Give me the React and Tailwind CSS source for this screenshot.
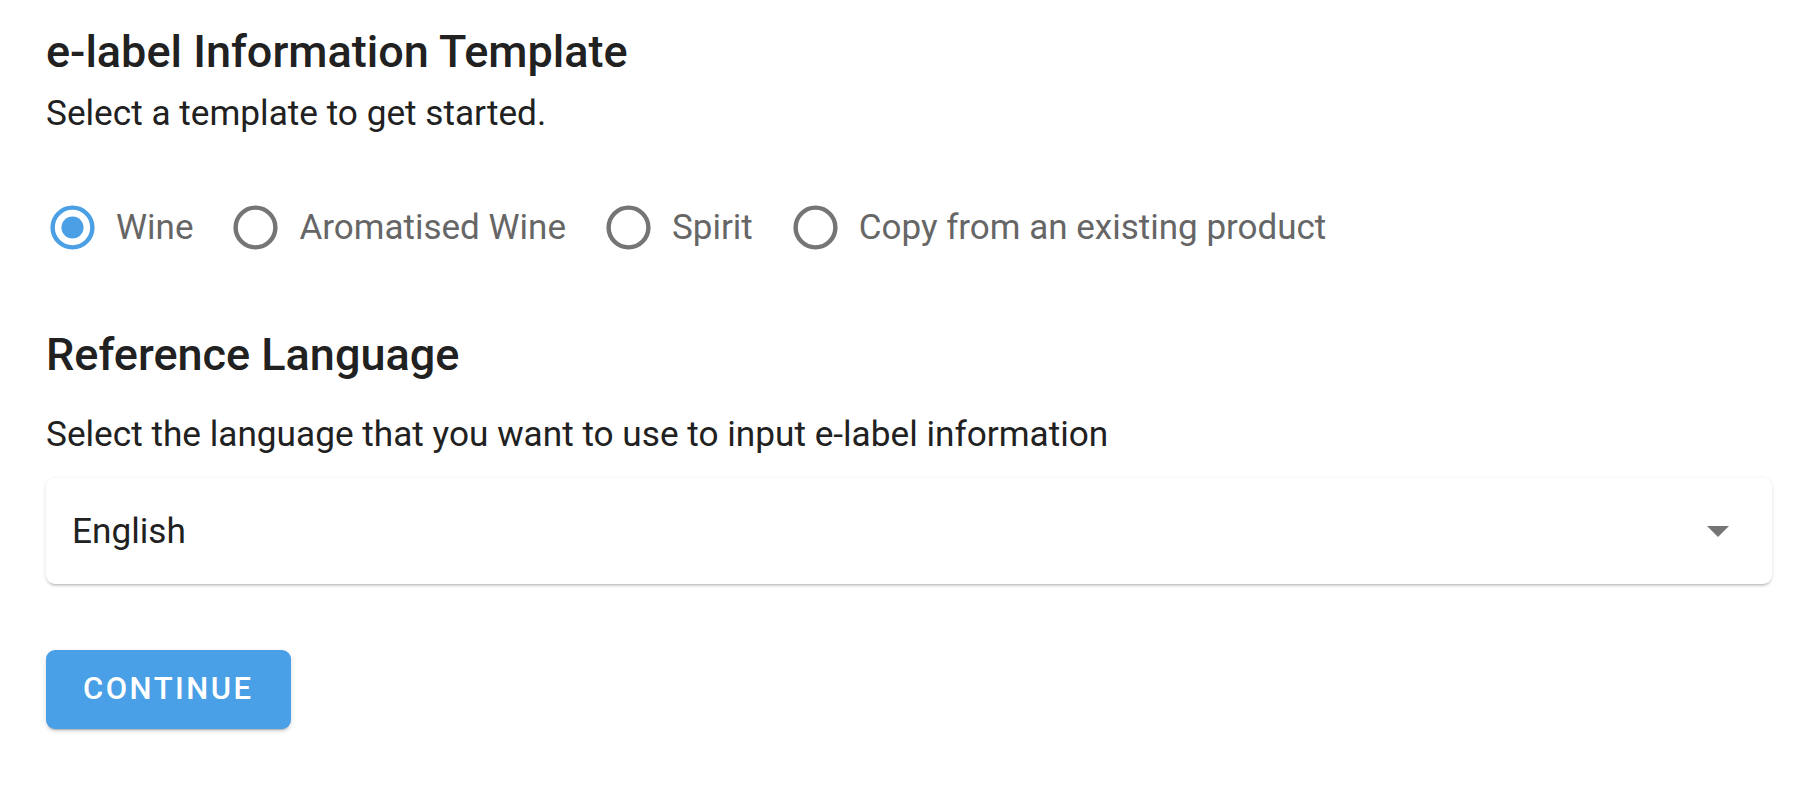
import { useState } from 'react';

const options = ['Wine', 'Aromatised Wine', 'Spirit', 'Copy from an existing product'];

function RadioIcon({ checked }) {
    return (
        <svg viewBox="0 0 24 24" className="w-[53px] h-[53px] shrink-0">
            <circle cx="12" cy="12" r="9" fill="none" strokeWidth="2" stroke={checked ? '#4a9fe5' : '#757575'} />
            {checked && <circle cx="12" cy="12" r="5" fill="#4a9fe5" />}
        </svg>
    );
}

export default function App() {
    const [template, setTemplate] = useState('Wine');

    return (
        <div className="min-h-screen bg-white pl-[46px] pt-[26px] text-[#212121]" style={{ fontFamily: 'Roboto, "Noto Sans", sans-serif' }}>
            {/* Template */}
            <h2 className="text-[45px] leading-[52px] font-medium">e-label Information Template</h2>
            <p className="mt-[14px] text-[35.2px] leading-[42px]">Select a template to get started.</p>

            <div className="mt-[67px] flex items-center gap-[36px]">
                {options.map((opt) => (
                    <label key={opt} className="flex items-center gap-[17px] cursor-pointer" onClick={() => setTemplate(opt)}>
                        <RadioIcon checked={template === opt} />
                        <span className="text-[35px] leading-[42px] text-[#666666]">{opt}</span>
                    </label>
                ))}
            </div>

            {/* Language */}
            <h2 className="mt-[75px] text-[45px] leading-[52px] font-medium">Reference Language</h2>
            <p className="mt-[32px] text-[35.2px] leading-[42px]">Select the language that you want to use to input e-label information</p>

            <div className="mt-[23px] w-[1726px] h-[106px] rounded-[9px] bg-white flex items-center justify-between pl-[26px] pr-[43px] shadow-[0_3px_3px_-2px_rgba(0,0,0,0.25),0_1px_4px_rgba(0,0,0,0.12)]">
                <span className="text-[35.2px] leading-[42px]">English</span>
                <svg viewBox="0 0 10 5" className="w-[22px] h-[11px]">
                    <path d="M0 0l5 5 5-5z" fill="#757575" />
                </svg>
            </div>

            <button className="mt-[66px] h-[79px] px-[37px] rounded-[9px] bg-[#4aa0e6] text-white text-[31px] font-medium tracking-[2.5px] uppercase shadow-[0_3px_2px_-2px_rgba(0,0,0,0.25),0_2px_5px_rgba(0,0,0,0.14)]">
                Continue
            </button>
        </div>
    );
}
